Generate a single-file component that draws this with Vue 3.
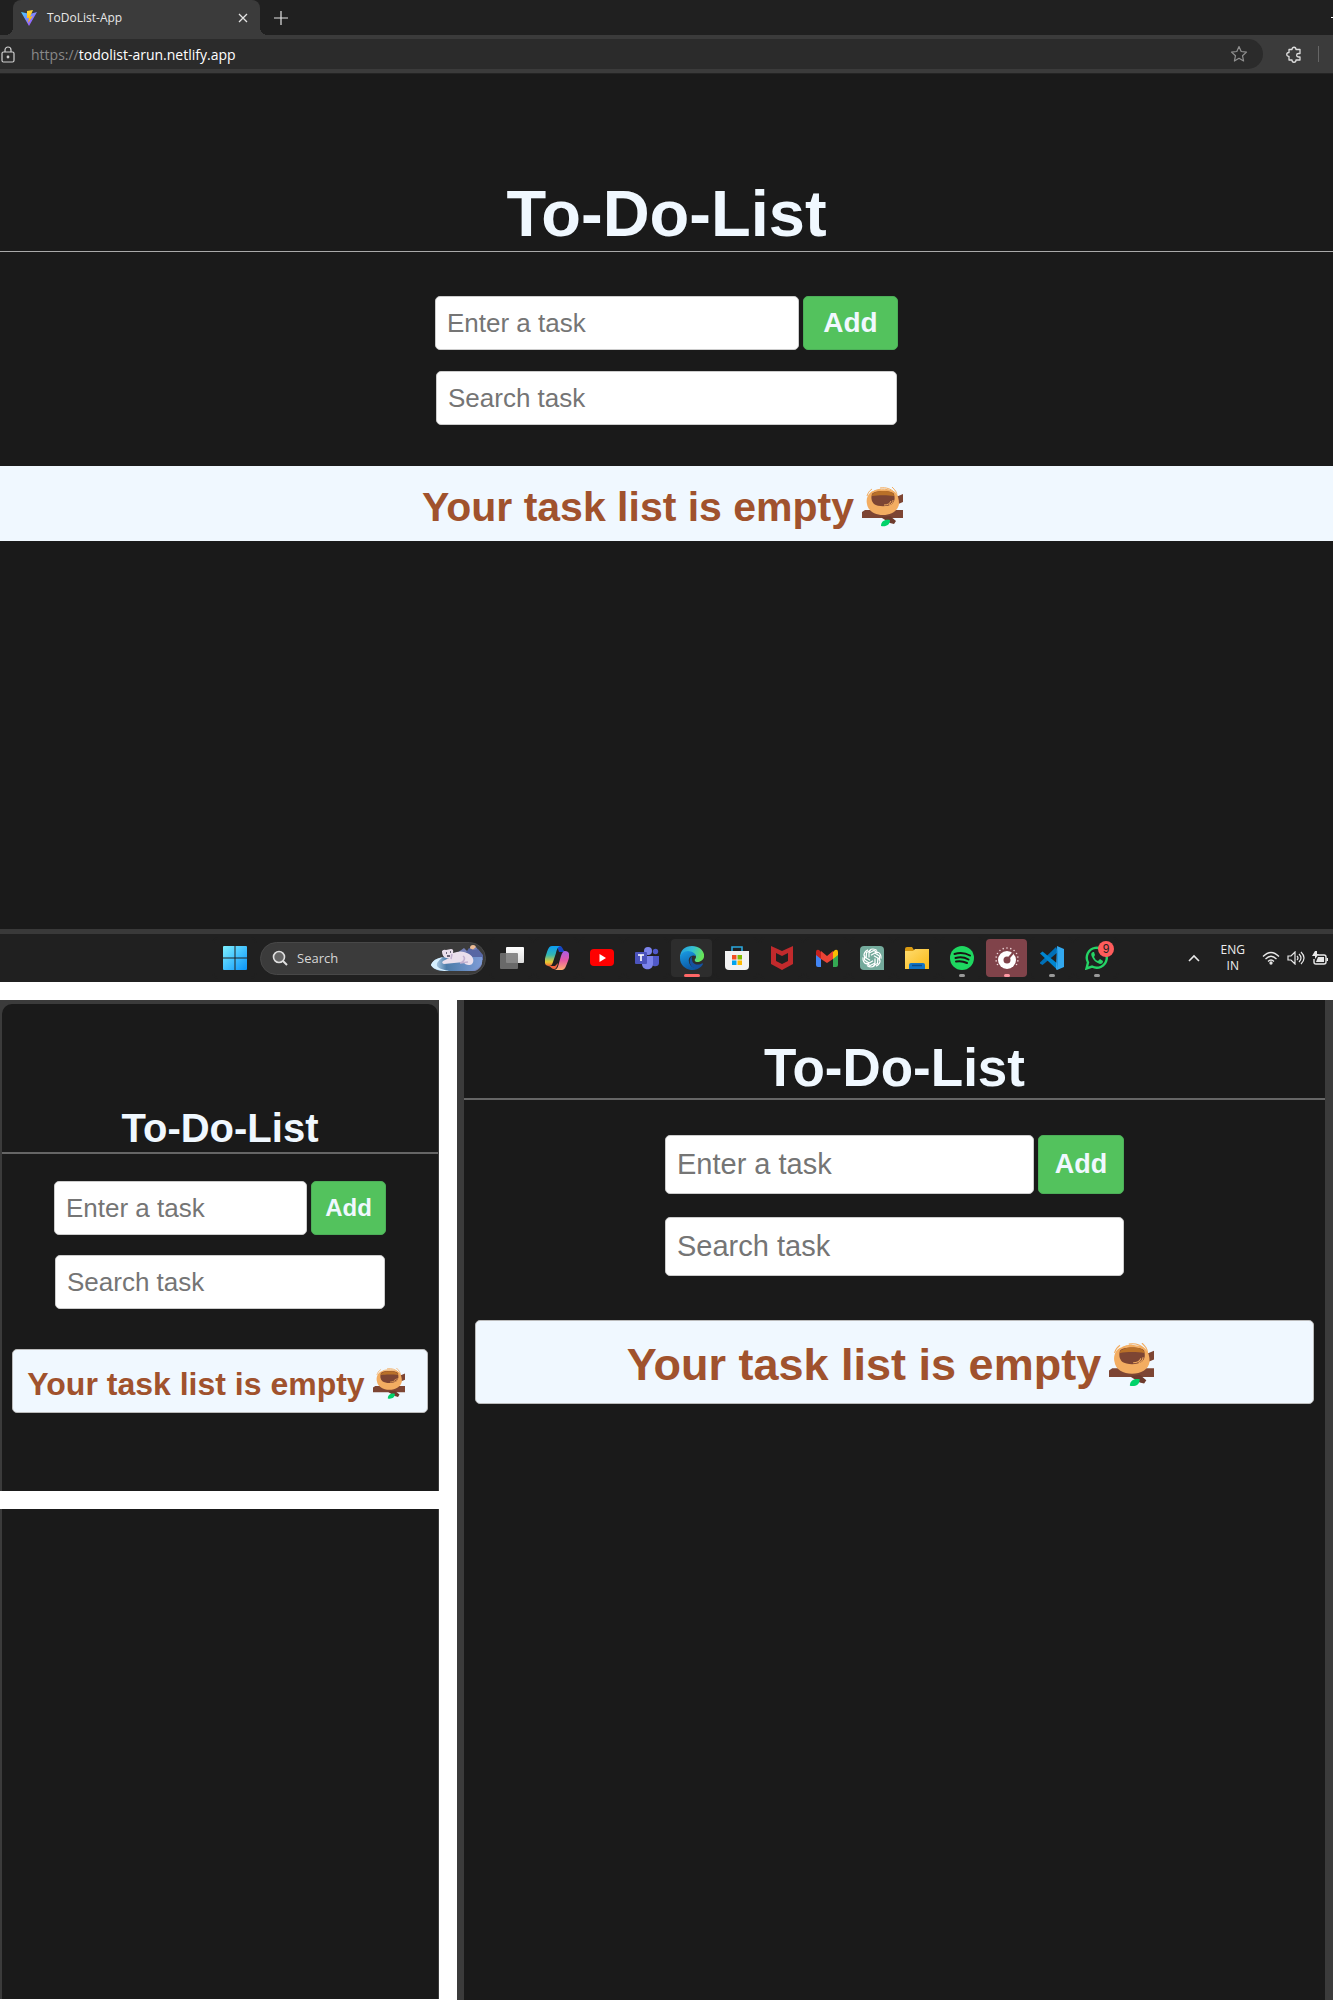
<script setup>
import { reactive } from 'vue'

const entries = reactive({
  desktop: { task: '', search: '' },
  phone: { task: '', search: '' },
  tablet: { task: '', search: '' },
})
const dialDots = Array.from({ length: 13 }, (_, i) => {
  const angle = ((150 + i * 20) * Math.PI) / 180
  return { x: 12 + 11 * Math.cos(angle), y: 13 + 11 * Math.sin(angle) }
})
</script>

<template>
  <svg class="defs" aria-hidden="true">
    <symbol id="nest" viewBox="0 0 41 41">
      <path d="M34 10l7-3v8l-7 3zM0 25l3-2h38v8H0z" fill="#7d4533" />
      <path d="M20 30l8-1 6 5-2 3-4-1-8-5z" fill="#6d3b2d" />
      <path d="M19 39c0-5 4-7 9-6 0 5-4 7-9 6z" fill="#00d26a" />
      <path d="M9 5C5 8 4 13 5 17c1 7 8 11 16 11s15-4 16-11c0-5-1-9-4-12-4-3-20-3-24 0z" fill="#f3ad61" />
      <path d="M10 2C7 4 6 6 5 9M12 4C18 1 27 2 32 5M18 1c6-1 11 1 14 4M30 0c3 3 5 5 5 9" fill="none" stroke="#f3ad61" stroke-width="1" />
      <path d="M10 7c2-4 20-4 22 0 1 4 1 7-2 10-4 3-14 3-18 0-3-3-3-7-2-10z" fill="#7d4533" />
      <path d="M10 9c-1-6 23-7 22 0-6-1-16-1-22 0z" fill="#b97028" />
      <path d="M22 18c3 0 6-1 7-4M27 18c3-1 4-3 4-5" fill="none" stroke="#f3ad61" stroke-width="1" />
    </symbol>
  </svg>

  <main class="showcase">
    <section class="browser">
      <header>
        <div class="tab-strip">
          <div class="tab">
            <svg class="favicon" viewBox="0 0 16 16" aria-hidden="true">
              <defs>
                <linearGradient id="viteA" x1="0" y1="0" x2="1" y2="1"><stop stop-color="#41d1ff" /><stop offset="1" stop-color="#bd34fe" /></linearGradient>
                <linearGradient id="viteB" x1="0" y1="0" x2="0" y2="1"><stop stop-color="#ffdd35" /><stop offset="1" stop-color="#ffa800" /></linearGradient>
              </defs>
              <path d="M0 2l8 14 8-14-7 2z" fill="url(#viteA)" />
              <path d="M12 0L6 1v7h2l-1 5 5-7-3 1z" fill="url(#viteB)" />
            </svg>
            <span class="tab-title">ToDoList-App</span>
            <button class="plain" aria-label="Close tab">
              <svg width="10" height="10" viewBox="0 0 10 10"><path d="M1 1l8 8M9 1L1 9" stroke="#e4e4e4" stroke-width="1.3" /></svg>
            </button>
          </div>
          <button class="plain new-tab" aria-label="New tab">
            <svg width="14" height="14" viewBox="0 0 14 14"><path d="M7 0v14M0 7h14" stroke="#e4e4e4" stroke-width="1.2" /></svg>
          </button>
          <span class="minimize"></span>
        </div>
        <div class="toolbar">
          <div class="address">
            <svg width="14" height="17" viewBox="0 0 14 17" fill="none" stroke="#d0d0d0" stroke-width="1.2" aria-hidden="true">
              <rect x="1" y="6" width="12" height="10" rx="1.5" /><path d="M4 6V4a3 3 0 0 1 6 0v2" /><circle cx="7" cy="11" r=".8" fill="#d0d0d0" />
            </svg>
            <span class="url"><span>https://</span>todolist-arun.netlify.app</span>
            <button class="plain star" aria-label="Add to favorites">
              <svg width="18" height="18" viewBox="0 0 18 18"><path d="M9 1.5l2.2 5 5.3.6-4 3.6 1.1 5.3L9 13.3 4.4 16l1.1-5.3-4-3.6 5.3-.6z" fill="none" stroke="#909090" stroke-width="1.2" stroke-linejoin="round" /></svg>
            </button>
          </div>
          <button class="plain" aria-label="Extensions">
            <svg width="16" height="17" viewBox="0 0 16 17"><path d="M3 3.500h3c0-3 4-3 4 0h4v4h-1.500c-2.500 0-2.500 3.500 0 3.500H14v3h-4c0 3-4 3-4 0H3v-3.500c-3 0-3-4 0-4z" fill="none" stroke="#dedede" stroke-width="1.3" stroke-linejoin="round" /></svg>
          </button>
          <span class="divider"></span>
        </div>
      </header>

      <div class="todo desktop">
        <h1>To-Do-List</h1>
        <form class="add-row" @submit.prevent>
          <input v-model="entries.desktop.task" type="text" placeholder="Enter a task" aria-label="Enter a task" />
          <button type="submit">Add</button>
        </form>
        <input v-model="entries.desktop.search" class="search" type="text" placeholder="Search task" aria-label="Search task" />
        <p class="empty">Your task list is empty<svg aria-hidden="true"><use href="#nest" /></svg></p>
      </div>

      <footer class="taskbar">
        <nav class="apps">
          <button class="app" aria-label="Start">
            <svg viewBox="0 0 24 24">
              <defs><linearGradient id="win" x1="0" y1="0" x2="1" y2="1" ><stop stop-color="#7df0ff" /><stop offset="1" stop-color="#0a94fb" /></linearGradient></defs>
              <path d="M0 1q0-1 1-1h10.500v11.500H0zM12.500 0H23q1 0 1 1v10.500H12.500zM0 12.500h11.500V24H1q-1 0-1-1zM12.500 12.500H24V23q0 1-1 1H12.500z" fill="url(#win)" />
            </svg>
          </button>
          <button class="os-search">
            <svg class="glass" width="16" height="16" viewBox="0 0 16 16"><circle cx="7" cy="7" r="5.500" fill="#666" stroke="#e0e0e0" stroke-width="1.600" /><path d="M11 11l4 4" stroke="#e0e0e0" stroke-width="2" /></svg>
            Search
            <svg class="bear" width="52" height="26" viewBox="0 0 52 26" aria-hidden="true">
              <defs><linearGradient id="ice" x1="0" y1="0" x2="1" y2="0"><stop stop-color="#d8efff" /><stop offset=".3" stop-color="#4d7ca9" /><stop offset="1" stop-color="#7e9cd7" /></linearGradient></defs>
              <circle cx="42" cy="3" r="3" fill="#efbd96" />
              <path d="M26 8l7-5 5 5 7-6 6 8v9c-2 6-8 8-12 8H20z" fill="#7681b7" />
              <path d="M34 9l4-6 5 2 4-1 5 6v5H34z" fill="#5867a4" />
              <path d="M0 20c2-6 9-8 16-8h35c2 7-4 14-12 14H14C7 26 2 24 0 20z" fill="url(#ice)" />
              <path d="M6 21c2 3 8 4 12 5h-5C7 25 3 24 0 20c2-5 7-7 12-8-3 3-7 5-6 9z" fill="#d6efff" />
              <path d="M11 6q2-2 4-1l5-1q3 0 2 4 8-3 14 0c6 2 8 8 5 11-2 2-8 1-8-2l-10 1-10 1q-3-1-1-3l6-3c-5 1-7-3-7-7z" fill="#eadfec" />
              <path d="M32 11c3 2 1 6-3 7l8-1M21 9l-1 5" fill="none" stroke="#c3b1d0" stroke-width="1.500" />
              <path d="M15 8h1M19 7h1M16 11h3" stroke="#403c50" stroke-width="1.300" />
            </svg>
          </button>
          <button class="app" aria-label="Task view">
            <svg viewBox="0 0 24 24"><defs><linearGradient id="tv" x1="0" y1="0" x2="0" y2="1"><stop stop-color="#fff" /><stop offset="1" stop-color="#ddd" /></linearGradient></defs><rect x="6" y="1" width="18" height="16" rx="1" fill="url(#tv)" /><rect x="0" y="7" width="18" height="16" rx="1" fill="#777" opacity=".85" /></svg>
          </button>
          <button class="app" aria-label="Copilot">
            <svg viewBox="0 0 24 24">
              <defs>
                <linearGradient id="cpA" x1="0" y1="0" x2="0" y2="1"><stop stop-color="#0a9df5" /><stop offset=".45" stop-color="#34b8b0" /><stop offset=".8" stop-color="#e9cb2f" /><stop offset="1" stop-color="#f1693c" /></linearGradient>
                <linearGradient id="cpB" x1="0" y1="0" x2="0" y2="1"><stop stop-color="#a95ce8" /><stop offset=".5" stop-color="#e65aa3" /><stop offset="1" stop-color="#ffb070" /></linearGradient>
              </defs>
              <path d="M12 0h3c3 0 3 6 6 6h-7z" fill="#1746c4" />
              <path d="M7 0h9c-3 0-4 3-5 7l-3 9c-1 3-2 4-4 4-5 0-5-5-3-11S4 0 7 0z" fill="url(#cpA)" />
              <path d="M17 24H9c3 0 4-3 5-7l2-7c1-3 2-5 4-5 5 0 5 5 3 10s-3 9-6 9z" fill="url(#cpB)" />
              <path d="M3 20h7l3-3c-1 4-2 6-4 6-3 0-3-3-6-3z" fill="#f26440" />
            </svg>
          </button>
          <button class="app" aria-label="YouTube">
            <svg viewBox="0 0 24 24"><rect y="3" width="24" height="17" rx="4" fill="#f00" /><path d="M9.500 8v8l6.500-4z" fill="#fff" /></svg>
          </button>
          <button class="app" aria-label="Teams">
            <svg viewBox="0 0 24 24">
              <circle cx="13" cy="5" r="4" fill="#7b83eb" /><circle cx="20.500" cy="5.500" r="2.700" fill="#5059c9" />
              <path d="M16 10h8v7c0 4-5 4-7 2z" fill="#5059c9" /><path d="M7 10h11v8c0 7-11 7-11 0z" fill="#7b83eb" />
              <rect x="0" y="6" width="12" height="12" rx="1" fill="#4b53bc" /><path d="M3 9h6M6 9v6" stroke="#fff" stroke-width="1.600" />
            </svg>
          </button>
          <button class="app active-edge" aria-label="Microsoft Edge">
            <svg viewBox="0 0 24 24">
              <defs>
                <linearGradient id="edA" x1="0" y1="0" x2="1" y2=".3"><stop stop-color="#239be0" /><stop offset=".55" stop-color="#35c1d2" /><stop offset="1" stop-color="#66e45a" /></linearGradient>
                <linearGradient id="edB" x1="0" y1="0" x2=".4" y2="1"><stop stop-color="#1a9ee6" /><stop offset="1" stop-color="#0c59a4" /></linearGradient>
              </defs>
              <path d="M0 12C0 4 5 0 12 0c8 0 13 6 12 11-1 5-8 6-9 4s1-2 1-4c0-3-4-5-8-4S1 9 0 12z" fill="url(#edA)" />
              <path d="M0 12c0-4 4-7 8-7s8 3 8 5c-5-2-8 2-7 6 1 5 6 7 10 6-3 2-6 2-8 2C5 23 0 19 0 12z" fill="url(#edB)" />
              <path d="M12 10c-4 3-3 12 5 13 3-1 5-3 6-5 0-1-1-1-2 0-6 2-10-1-9-8z" fill="#1551a0" />
            </svg>
          </button>
          <button class="app" aria-label="Microsoft Store">
            <svg viewBox="0 0 24 24"><path d="M7 6V1h10v5" fill="none" stroke="#2aa7dc" stroke-width="1.600" /><path d="M0 5h24v15q0 4-4 4H4q-4 0-4-4z" fill="#f2f2f2" /><path d="M7 9h4.500v4.500H7z" fill="#f25022" /><path d="M12.500 9H17v4.500h-4.500z" fill="#7fba00" /><path d="M7 14.500h4.500V19H7z" fill="#00a4ef" /><path d="M12.500 14.500H17V19h-4.500z" fill="#ffb900" /></svg>
          </button>
          <button class="app" aria-label="McAfee">
            <svg viewBox="0 0 24 24"><path d="M1 0l11 5L23 0v18l-11 6-11-6zM6 7v8l6 3 6-3V7l-6 3z" fill="#c12a2c" fill-rule="evenodd" /></svg>
          </button>
          <button class="app" aria-label="Gmail">
            <svg viewBox="0 0 24 24"><path d="M1 6l5 4v11H3q-2 0-2-2z" fill="#4285f4" /><path d="M23 6l-5 4v11h3q2 0 2-2z" fill="#34a853" /><path d="M18 6l2-2q3-1 3 2v3l-5 4z" fill="#fbbc04" /><path d="M6 6L4 4Q1 3 1 6v3l5 4z" fill="#c5221f" /><path d="M6 5l6 5 6-5v8l-6 4-6-4z" fill="#ea4335" /></svg>
          </button>
          <button class="app" aria-label="ChatGPT">
            <svg viewBox="0 0 24 24">
              <path d="M4 0h16q4 0 4 4v20H4q-4 0-4-4V4q0-4 4-4z" fill="#74aa9c" />
              <g fill="none" stroke="#fff" stroke-width="1.200"><path v-for="n in 6" :key="n" d="M9 11.500V7q0-4 4-4 2 0 4 1.500M9 7l5-2.500 4 2.500" :transform="`rotate(${n * 60} 12 12)`" /></g>
            </svg>
          </button>
          <button class="app" aria-label="File Explorer">
            <svg viewBox="0 0 24 24"><path d="M0 3q0-2 2-2h5l2 3h6v8H0z" fill="#d99a12" /><defs><linearGradient id="fo" x1="0" y1="0" x2="1" y2="1"><stop stop-color="#ffdc70" /><stop offset="1" stop-color="#f9b916" /></linearGradient></defs><path d="M0 5h8l2-2h14v20H0z" fill="url(#fo)" /><path d="M4 23v-4q0-2 2-2h12q2 0 2 2v4z" fill="#1073c5" /><path d="M7 19.500h10" stroke="#0a4a8a" stroke-width="1.500" /></svg>
          </button>
          <button class="app running" aria-label="Spotify">
            <svg viewBox="0 0 24 24"><circle cx="12" cy="12" r="12" fill="#1ed760" /><path d="M4.500 8c5-1.500 11-1 15.500 1.500M5.500 12c4-1.200 9-.8 13 1.500M6 15.500c4-.8 7-.5 11 1.500" fill="none" stroke="#191414" stroke-width="2" stroke-linecap="round" /></svg>
          </button>
          <button class="app running alert" aria-label="Dial">
            <svg viewBox="0 0 24 24"><circle v-for="dot in dialDots" :key="dot.x" :cx="dot.x" :cy="dot.y" r=".8" fill="#ecd5d8" /><circle cx="12" cy="14" r="9" fill="#fff" /><circle cx="12" cy="14" r="3.500" fill="#80434a" /><path d="M12 14l6-7" stroke="#80434a" stroke-width="2" /></svg>
          </button>
          <button class="app running" aria-label="Visual Studio Code">
            <svg viewBox="0 0 24 24"><path d="M0 16.500L16 1l2 5L2.500 19 0 17.500z" fill="#0070b8" /><path d="M0 7.500L2.500 5.500 18 18l-1 5.500z" fill="#0086d1" /><path d="M17 0l7 3v18l-7 3-1-1z" fill="#32a8ef" /><path d="M17 0v24l1-6V6z" fill="#1d91dd" /></svg>
          </button>
          <button class="app running" aria-label="WhatsApp, 9 unread">
            <svg viewBox="0 0 24 24"><path d="M1.500 22.500l1.500-6a10 10 0 1 1 4 4z" fill="none" stroke="#25d366" stroke-width="2.400" /><path d="M8 6q-3 1-1 5 2 5 8 7 3 0 3-3l-3-2-2 2q-3-1-4-4l1-2-1-3z" fill="#25d366" /></svg>
            <span class="badge">9</span>
          </button>
        </nav>
        <div class="tray">
          <svg class="chevron" width="12" height="8" viewBox="0 0 12 8"><path d="M1 7l5-5 5 5" fill="none" stroke="#e8e8e8" stroke-width="1.600" /></svg>
          <span class="lang">ENG<br />IN</span>
          <svg width="18" height="14" viewBox="0 0 18 14" fill="none" stroke="#e8e8e8" stroke-width="1.300"><path d="M1 5.500q8-8 16 0M3.500 8q5.500-5.500 11 0M6 10.500q3-3 6 0" /><circle cx="9" cy="12" r="1" fill="#e8e8e8" /></svg>
          <svg width="18" height="14" viewBox="0 0 18 14" fill="none" stroke="#e8e8e8" stroke-width="1.200"><path d="M1 5v4h3l4 4V1L4 5zM10 5q2 2 0 4M12 3q4 4 0 8M14 1q6 6 0 12" /></svg>
          <svg width="17" height="15" viewBox="0 0 17 15"><path d="M6 4h6q2 0 2 2v5q0 2-2 2H4q-2 0-2-2V8" fill="none" stroke="#e8e8e8" stroke-width="1.400" /><path d="M6 6h6v5H4zM14.500 7H16v3h-1.500zM3 0h2v3h2L3 8V5H0z" fill="#e8e8e8" /></svg>
        </div>
      </footer>
    </section>

    <div class="devices">
      <div class="phones">
        <section class="phone-frame">
          <div class="todo phone">
            <h1>To-Do-List</h1>
            <form class="add-row" @submit.prevent>
              <input v-model="entries.phone.task" type="text" placeholder="Enter a task" aria-label="Enter a task" />
              <button type="submit">Add</button>
            </form>
            <input v-model="entries.phone.search" class="search" type="text" placeholder="Search task" aria-label="Search task" />
            <p class="empty">Your task list is empty<svg aria-hidden="true"><use href="#nest" /></svg></p>
          </div>
        </section>
        <section class="blank-frame"></section>
      </div>
      <section class="tablet-frame">
        <div class="todo tablet">
          <h1>To-Do-List</h1>
          <form class="add-row" @submit.prevent>
            <input v-model="entries.tablet.task" type="text" placeholder="Enter a task" aria-label="Enter a task" />
            <button type="submit">Add</button>
          </form>
          <input v-model="entries.tablet.search" class="search" type="text" placeholder="Search task" aria-label="Search task" />
          <p class="empty">Your task list is empty<svg aria-hidden="true"><use href="#nest" /></svg></p>
        </div>
      </section>
    </div>
  </main>
</template>

<style>
body {
  margin: 0;
  background: #fff;
}
</style>

<style scoped>
.defs {
  position: absolute;
  width: 0;
  height: 0;
}
.showcase {
  display: flex;
  flex-direction: column;
  gap: 18px;
  min-height: 100vh;
  overflow: hidden;
  font-family: "Liberation Sans", Arial, sans-serif;
}
button {
  font-family: inherit;
}
.plain {
  display: flex;
  padding: 0;
  border: 0;
  background: none;
}

/* Browser window */
.browser {
  background: #1a1a1a;
}
.tab-strip,
.toolbar,
.os-search,
.tray {
  font-family: "Open Sans", "Noto Sans", sans-serif;
}
.tab-strip {
  display: flex;
  align-items: center;
  height: 35px;
  background: #202020;
}
.tab {
  position: relative;
  display: flex;
  align-items: center;
  box-sizing: border-box;
  width: 247px;
  height: 35px;
  margin-left: 13px;
  padding: 0 12px 0 8px;
  border-radius: 8px 8px 0 0;
  background: #3b3b3b;
}
.tab::before,
.tab::after {
  content: "";
  position: absolute;
  bottom: 0;
  width: 8px;
  height: 8px;
}
.tab::before {
  right: 100%;
  background: radial-gradient(circle at 0 0, transparent 8px, #3b3b3b 8px);
}
.tab::after {
  left: 100%;
  background: radial-gradient(circle at 100% 0, transparent 8px, #3b3b3b 8px);
}
.favicon {
  width: 16px;
  height: 16px;
}
.tab-title {
  flex: 1;
  margin-left: 10px;
  color: #e8e8e8;
  font-size: 12px;
}
.new-tab {
  margin-left: 14px;
}
.minimize {
  width: 2px;
  height: 1px;
  margin-left: auto;
  background: #fff;
}
.toolbar {
  display: flex;
  align-items: center;
  height: 38px;
  border-bottom: 1px solid #242424;
  background: #3b3b3b;
}
.address {
  display: flex;
  flex: 1;
  align-items: center;
  height: 30px;
  padding: 0 15px 0 1px;
  border-radius: 0 15px 15px 0;
  margin-right: 23px;
  background: #2b2b2b;
}
.url {
  flex: 1;
  margin-left: 16px;
  color: #fff;
  font-size: 14px;
}
.url span {
  color: #888;
}
.divider {
  width: 1px;
  height: 16px;
  margin: 0 14px 0 16px;
  background: #666;
}

/* To-do page */
.todo {
  display: flex;
  flex-direction: column;
  align-items: center;
  background: #1a1a1a;
}
.todo h1 {
  align-self: stretch;
  margin: 0;
  color: #f0f8ff;
  text-align: center;
  font-weight: 700;
}
.add-row {
  display: flex;
  gap: 4px;
}
.todo input {
  box-sizing: border-box;
  min-width: 0;
  height: 54px;
  padding: 0 11px;
  border: 1px solid #ccc;
  border-radius: 5px;
  background: #fff;
  color: #222;
  font-family: inherit;
  font-size: 26px;
}
.todo input::placeholder {
  color: #757575;
}
.add-row input {
  flex: 1;
}
.add-row button {
  padding: 0;
  border: 1px solid #4cae58;
  border-radius: 5px;
  background: #53c25d;
  color: #f0f8ff;
  font-weight: 700;
}
.empty {
  display: flex;
  align-self: stretch;
  align-items: center;
  justify-content: center;
  box-sizing: border-box;
  margin: 0;
  padding: 6px 8px 0 0;
  background: #f0f8ff;
  color: #a0522d;
  font-weight: 700;
  white-space: nowrap;
}
.desktop {
  min-height: 753px;
  padding-top: 102px;
}
.desktop h1 {
  border-bottom: 1px solid #aaa;
  font-size: 65px;
  line-height: 75px;
}
.desktop .add-row {
  width: 463px;
  margin-top: 44px;
}
.desktop .add-row button {
  width: 95px;
  font-size: 28px;
}
.desktop .search {
  width: 461px;
  margin-top: 21px;
}
.desktop .empty {
  height: 75px;
  margin-top: 41px;
  padding-top: 8px;
  font-size: 41px;
}
.desktop .empty svg {
  width: 41px;
  height: 41px;
  margin-left: 8px;
}

/* Taskbar */
.taskbar {
  display: grid;
  grid-template-columns: 1fr auto 1fr;
  align-items: center;
  height: 48px;
  border-top: 5px solid #393939;
  background: #202020;
}
.apps {
  display: flex;
  grid-column: 2;
  align-items: center;
  padding-right: 2px;
}
.app {
  position: relative;
  display: flex;
  align-items: center;
  justify-content: center;
  width: 45px;
  height: 42px;
  padding: 0;
  border: 2px solid #202020;
  border-radius: 6px;
  background: #202020;
}
.app > svg {
  width: 24px;
  height: 24px;
}
.os-search {
  display: flex;
  align-items: center;
  width: 226px;
  height: 33px;
  margin: 0 3px;
  padding: 0 2px 0 11px;
  border: 1px solid #484848;
  border-radius: 17px;
  background: #3b3b3b;
  color: #d6d6d6;
  font-size: 13px;
}
.glass {
  margin-right: 9px;
}
.bear {
  margin-left: auto;
}
.active-edge {
  background: #2d2d2d;
}
.active-edge::after,
.running::after {
  content: "";
  position: absolute;
  bottom: 0;
  left: 50%;
  width: 6px;
  height: 3px;
  margin-left: -3px;
  border-radius: 2px;
  background: #999;
}
.active-edge::after {
  width: 16px;
  margin-left: -8px;
  background: #ff6767;
}
.alert {
  background: #80434a;
}
.alert::after {
  background: #ff99a4;
}
.badge {
  position: absolute;
  top: 2px;
  right: 3px;
  width: 16px;
  border-radius: 8px;
  background: #ff5c5c;
  color: #222;
  font-size: 12px;
  line-height: 16px;
}
.tray {
  display: flex;
  align-items: center;
  justify-content: flex-end;
  gap: 7px;
  padding-right: 4px;
}
.lang {
  margin: 0 10px 0 14px;
  color: #eee;
  font-size: 12px;
  line-height: 16px;
  text-align: center;
}

/* Device previews */
.devices {
  display: grid;
  flex: 1;
  grid-template-columns: minmax(0, 439fr) minmax(0, 876fr);
  gap: 18px;
}
.phones {
  display: grid;
  grid-template-rows: 1fr 1fr;
  gap: 18px;
  padding-bottom: 1px;
}
.phone-frame {
  display: flex;
  padding: 4px 1px 0 2px;
  background: #3b3b3b;
}
.blank-frame {
  border: solid #3b3b3b;
  border-width: 0 1px 0 2px;
  background: #1a1a1a;
}
.phone {
  flex: 1;
  padding-top: 101px;
  border-radius: 10px 10px 0 0;
}
.phone h1 {
  border-bottom: 2px solid #666;
  font-size: 40px;
  line-height: 47px;
}
.phone .add-row {
  width: 332px;
  margin-top: 27px;
}
.phone .add-row button {
  width: 75px;
  font-size: 24px;
}
.phone .search {
  width: 330px;
  margin-top: 20px;
}
.phone .empty {
  height: 64px;
  margin: 40px 10px 0;
  border: 1px solid #bbb;
  border-radius: 5px;
  font-size: 32px;
}
.phone .empty svg {
  width: 32px;
  height: 32px;
  margin-left: 8px;
}
.tablet-frame {
  display: flex;
  padding: 0 8px 0 7px;
  background: #3b3b3b;
}
.tablet {
  flex: 1;
  padding-top: 38px;
}
.tablet h1 {
  border-bottom: 2px solid #666;
  font-size: 53px;
  line-height: 60px;
}
.tablet .add-row {
  width: 459px;
  margin-top: 35px;
}
.tablet input {
  height: 59px;
  font-size: 29px;
}
.tablet .add-row button {
  width: 86px;
  font-size: 27px;
}
.tablet .search {
  width: 459px;
  margin-top: 23px;
}
.tablet .empty {
  height: 84px;
  margin: 44px 11px 0;
  border: 1px solid #bbb;
  border-radius: 5px;
  font-size: 45px;
}
.tablet .empty svg {
  width: 45px;
  height: 45px;
  margin-left: 8px;
}
</style>
